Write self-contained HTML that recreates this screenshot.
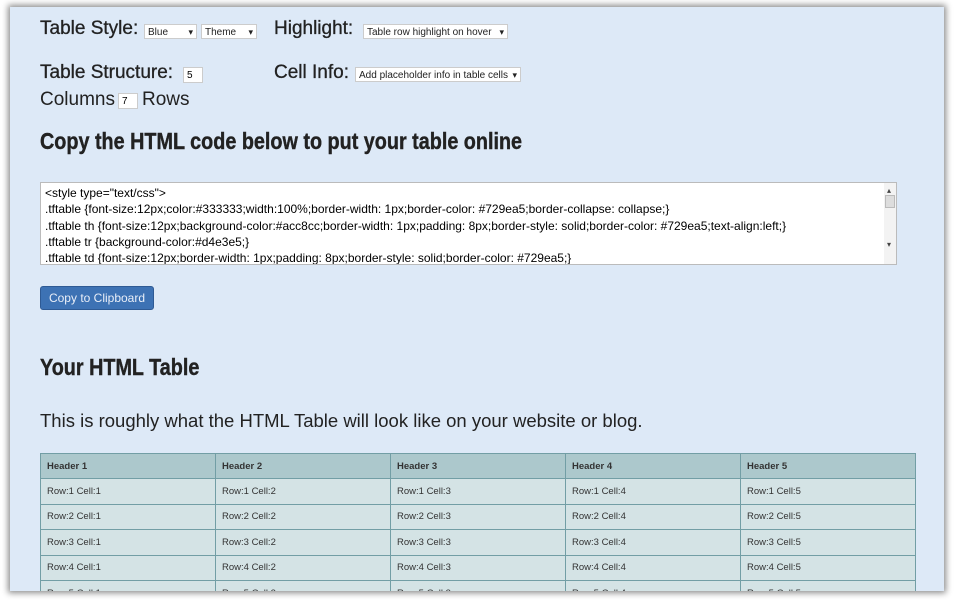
<!DOCTYPE html>
<html><head><style>
body{margin:0;width:954px;height:600px;background:#fff;overflow:hidden;position:relative;font-family:"Liberation Sans",sans-serif;}
#panel{position:absolute;left:10px;top:7px;width:934px;height:584px;background:#dde9f7;box-shadow:0 0 6px 2px rgba(0,0,0,.45);overflow:hidden;}
.a{position:absolute;white-space:nowrap;color:#222;}
.lbl{font-size:19px;-webkit-text-stroke:.3px #222;}
.sel{position:absolute;background:#fff;border:1px solid #ccc;font-size:10px;height:15px;line-height:15px;padding-left:3px;box-sizing:border-box;color:#222;}
.sel:after{content:"▾";position:absolute;right:3px;top:0;font-size:9px;}
.inp{position:absolute;background:#fff;border:1px solid #ccc;font-size:10px;height:16px;line-height:16px;padding-left:3px;box-sizing:border-box;}
h2{position:absolute;margin:0;font-size:23px;font-weight:bold;color:#222;transform:scaleX(.86);transform-origin:left;white-space:nowrap;-webkit-text-stroke:.4px #222;}
#ta{position:absolute;left:30px;top:175px;width:857px;height:83px;background:#fff;border:1px solid #bbb;box-sizing:border-box;font-size:12px;line-height:16.3px;padding:2px 4px;overflow:hidden;}
#ta div{white-space:nowrap}
#sb{position:absolute;right:0;top:0;width:12px;height:100%;background:#f3f3f3;}
#sb:before{content:"▴";position:absolute;top:0;left:3px;font-size:8px;color:#444}
#sb:after{content:"▾";position:absolute;top:54px;left:3px;font-size:8px;color:#444}
#th{position:absolute;right:1px;top:12px;width:10px;height:13px;background:#ddd;border:1px solid #bbb;box-sizing:border-box}
#btn{position:absolute;left:30px;top:279px;width:114px;height:24px;background:#3d72b4;border:1px solid #2e5a94;border-radius:3px;box-sizing:border-box;color:#e8eef8;font-size:12px;line-height:22px;text-align:center;}
table{position:absolute;left:30px;top:446px;width:876px;border-collapse:collapse;font-size:9.5px;color:#333;}
th{background:#acc8cc;border:1px solid #729ea5;text-align:left;padding:0 6px;height:24px;font-weight:bold;}
td{background:#d4e3e5;border:1px solid #729ea5;padding:0 6px;height:24.5px;}
</style></head><body>
<div id="panel">
<div class="a lbl" style="left:30px;top:11px">Table Style:</div>
<div class="sel" style="left:134px;top:17px;width:53px">Blue</div>
<div class="sel" style="left:191px;top:17px;width:56px">Theme</div>
<div class="a lbl" style="left:264px;top:11px">Highlight:</div>
<div class="sel" style="left:353px;top:17px;width:145px">Table row highlight on hover</div>
<div class="a lbl" style="left:30px;top:55px">Table Structure:</div>
<div class="inp" style="left:173px;top:60px;width:20px">5</div>
<div class="a lbl" style="left:264px;top:55px">Cell Info:</div>
<div class="sel" style="left:345px;top:60px;width:166px">Add placeholder info in table cells</div>
<div class="a lbl" style="left:30px;top:82px;-webkit-text-stroke:0">Columns</div>
<div class="inp" style="left:108px;top:86px;width:20px">7</div>
<div class="a lbl" style="left:132px;top:82px;-webkit-text-stroke:0">Rows</div>
<h2 style="top:121px;left:30px">Copy the HTML code below to put your table online</h2>
<div id="ta"><div>&lt;style type="text/css"&gt;</div>
<div>.tftable {font-size:12px;color:#333333;width:100%;border-width: 1px;border-color: #729ea5;border-collapse: collapse;}</div>
<div>.tftable th {font-size:12px;background-color:#acc8cc;border-width: 1px;padding: 8px;border-style: solid;border-color: #729ea5;text-align:left;}</div>
<div>.tftable tr {background-color:#d4e3e5;}</div>
<div>.tftable td {font-size:12px;border-width: 1px;padding: 8px;border-style: solid;border-color: #729ea5;}</div>
<div id="sb"><div id="th"></div></div></div>
<div id="btn">Copy to Clipboard</div>
<h2 style="top:347px;left:30px">Your HTML Table</h2>
<div class="a" style="left:30px;top:403px;font-size:18.5px">This is roughly what the HTML Table will look like on your website or blog.</div>
<table>
<tr><th>Header 1</th><th>Header 2</th><th>Header 3</th><th>Header 4</th><th>Header 5</th></tr>
<tr><td>Row:1 Cell:1</td><td>Row:1 Cell:2</td><td>Row:1 Cell:3</td><td>Row:1 Cell:4</td><td>Row:1 Cell:5</td></tr>
<tr><td>Row:2 Cell:1</td><td>Row:2 Cell:2</td><td>Row:2 Cell:3</td><td>Row:2 Cell:4</td><td>Row:2 Cell:5</td></tr>
<tr><td>Row:3 Cell:1</td><td>Row:3 Cell:2</td><td>Row:3 Cell:3</td><td>Row:3 Cell:4</td><td>Row:3 Cell:5</td></tr>
<tr><td>Row:4 Cell:1</td><td>Row:4 Cell:2</td><td>Row:4 Cell:3</td><td>Row:4 Cell:4</td><td>Row:4 Cell:5</td></tr>
<tr><td>Row:5 Cell:1</td><td>Row:5 Cell:2</td><td>Row:5 Cell:3</td><td>Row:5 Cell:4</td><td>Row:5 Cell:5</td></tr>
</table>
</div>
</body></html>
